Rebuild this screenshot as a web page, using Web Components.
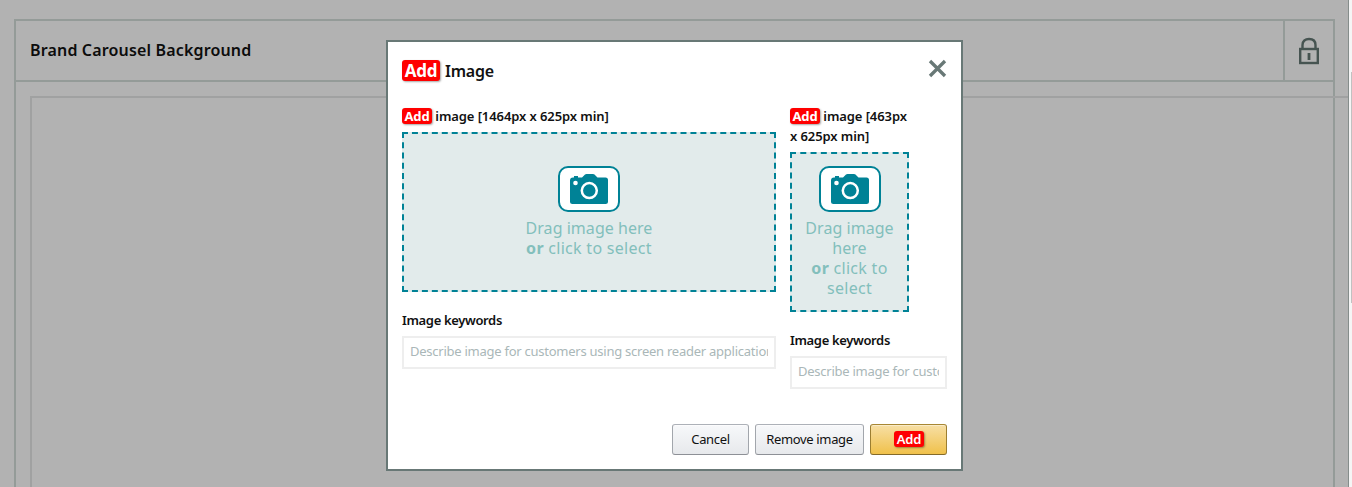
<!DOCTYPE html>
<html lang="en">
<head>
<meta charset="utf-8">
<title>Add Image</title>
<style>
html,body{margin:0;height:100%;overflow:hidden}
body{font-family:"Noto Sans","Open Sans",sans-serif;font-size:13px;line-height:20px;color:#111;background:#fff}
</style>
</head>
<body>
<app-page></app-page>
<script>
const define = (name, html) => customElements.define(name, class extends HTMLElement {
  constructor() {
    super();
    const t = document.createElement('template');
    t.innerHTML = html;
    this.attachShadow({mode: 'open'}).append(t.content.cloneNode(true));
  }
});

define('add-tag', `<style>
:host{display:inline-block;box-sizing:border-box;width:30px;height:16px;line-height:16px;border-radius:3px;background:#f00;color:#fff;font-size:13px;font-weight:700;text-align:center;box-shadow:1px 1px 2px rgba(0,0,0,.35);letter-spacing:-.2px;white-space:nowrap}
:host([large]){width:38px;height:21px;line-height:22px;font-size:17px;letter-spacing:-.3px}
:host([light]){font-weight:600}
</style><slot></slot>`);

define('lock-icon', `<style>:host,svg{display:block}</style>
<svg width="22" height="28" viewBox="0 0 22 28" fill="none" stroke="#465451" stroke-width="2.400"><rect x="2.200" y="12" width="17.600" height="14"/><path d="M4.500 12V8C4.500 4 7.300 2 11 2s6.500 2 6.500 6V12"/><path d="M11 16v7" stroke-width="2.800"/></svg>`);

define('camera-icon', `<style>
:host{display:flex;box-sizing:border-box;width:62px;height:46px;border:2px solid #008296;border-radius:10px;background:#fff;align-items:center;justify-content:center}
svg{display:block}
</style>
<svg width="38" height="30" viewBox="0 0 38 30"><path fill="#008296" d="M3 3.500h1V2h4v1.500h4L15 .600Q15.600 0 16.500 0h6.500q.900 0 1.500.600L27.500 3.500H35.500a2.500 2.500 0 0 1 2.500 2.500V27.500a2.500 2.500 0 0 1-2.500 2.500h-33A2.500 2.500 0 0 1 0 27.500V6.500a3 3 0 0 1 3-3z"/><circle cx="5.500" cy="9" r="2.300" fill="#fff"/><circle cx="19.300" cy="16.600" r="7.500" fill="none" stroke="#fff" stroke-width="2.500"/></svg>`);

define('drop-zone', `<style>
:host{display:flex;flex-direction:column;align-items:center;box-sizing:border-box;height:160px;padding-top:32px;border:2px dashed #008296;background:#e2ebeb;color:#83bfbc;font-size:16px;line-height:20px;text-align:center}
:host([narrow]){width:119px;padding:12px 10px 0}
camera-icon{margin-bottom:6px;flex:none}
p{margin:0;letter-spacing:.04px} b{font-weight:700}
.second{letter-spacing:.29px}
</style><camera-icon></camera-icon><p>Drag image here<br><span class="second"><b>or</b> click to select</span></p>`);

define('keyword-field', `<style>
:host{display:block;margin-top:18px}
label{display:block;font-weight:600;letter-spacing:-.35px}
input{display:block;box-sizing:border-box;width:100%;height:33px;margin:6px 0 0;padding:0 6px 4px;border:2px solid #eee;border-radius:0;background:#fff;font:13px "Noto Sans",sans-serif;letter-spacing:-.25px;outline:0}
input::placeholder{color:#aab7b8;opacity:1}
</style><label>Image keywords</label><input placeholder="Describe image for customers using screen reader applications">`);

define('image-upload', `<style>
:host{display:block;min-width:0}
.l{font-weight:600;letter-spacing:-.09px;margin-bottom:6px}
:host([narrow]) .l{width:130px}
</style><div class="l"><slot></slot></div><slot name="zone"></slot><keyword-field></keyword-field>`);

define('push-button', `<style>
:host{display:flex;box-sizing:border-box;width:77px;height:31px;padding-bottom:1px;align-items:center;justify-content:center;border:1px solid;border-color:#adb1b8 #a2a6ac #8d9096;border-radius:3px;background:linear-gradient(#f7f8fa,#e7e9ec);box-shadow:inset 0 1px 0 rgba(255,255,255,.6);font-size:13px;letter-spacing:-.35px;white-space:nowrap}
:host([wide]){width:109px}
:host([primary]){padding-left:1px;border-color:#a88734 #9c7e31 #846a29;background:linear-gradient(#f7dfa5,#f0c14b);box-shadow:inset 0 1px 0 rgba(255,255,255,.4)}
</style><slot></slot>`);

define('add-image-dialog', `<style>
:host{display:block;box-sizing:border-box;width:577px;height:431px;border:2px solid #687876;background:#fff;padding:0 14px}
header{display:flex;justify-content:space-between;align-items:flex-start;height:64px}
h2{display:flex;align-items:center;gap:5px;margin:18px 0 0;height:21px;font-size:16px;font-weight:600;line-height:21px;letter-spacing:-.25px}
h2 span{padding-top:1px}
header svg{margin-top:17px}
main{display:grid;grid-template-columns:374px 157px;gap:14px;height:318px}
footer{display:flex;justify-content:flex-end;gap:6px}
</style>
<header><h2><add-tag large>Add</add-tag><span>Image</span></h2>
<svg width="19" height="19" viewBox="0 0 19 19" stroke="#687876" stroke-width="3.300" fill="none"><path d="M2 2l15 15M17 2L2 17"/></svg></header>
<main><image-upload><add-tag>Add</add-tag> image [1464px x 625px min]<drop-zone slot="zone"></drop-zone></image-upload>
<image-upload narrow><add-tag>Add</add-tag> image [463px<br>x 625px min]<drop-zone slot="zone" narrow></drop-zone></image-upload></main>
<footer><push-button>Cancel</push-button><push-button wide>Remove image</push-button><push-button primary><add-tag light>Add</add-tag></push-button></footer>`);

define('module-card', `<style>
:host{display:block;box-sizing:border-box;width:1321px;height:500px;border:2px solid #949b98}
header{display:flex;height:59px;border-bottom:2px solid #949b98;align-items:stretch}
h1{flex:1;margin:0;padding-left:14px;font-size:16px;font-weight:600;line-height:58px;color:#0c0c0c;letter-spacing:.16px}
.lock{box-sizing:border-box;width:50px;border-left:2px solid #949b98;display:flex;align-items:center;justify-content:center}
.preview{box-sizing:border-box;width:1350px;height:500px;margin:14px 0 0 14px;border:2px solid #a0a1a1}
</style><header><h1><slot></slot></h1><div class="lock"><lock-icon></lock-icon></div></header><div class="preview"></div>`);

define('app-page', `<style>
:host{display:flex;height:100vh;position:relative;overflow:hidden}
.area{box-sizing:border-box;width:1349px;height:487px;overflow:hidden;background:#b2b2b2;border-right:1px solid #858d8b;padding:19px 0 0 14px}
.bar{width:3px;background:#f5f5f5;padding-top:72px;box-sizing:border-box}
.bar div{margin-left:2px;height:231px;background:#c1c1c1}
add-image-dialog{position:absolute;left:386px;top:40px}
</style><div class="area"><module-card>Brand Carousel Background</module-card></div><div class="bar"><div></div></div><add-image-dialog></add-image-dialog>`);
</script>
</body>
</html>
